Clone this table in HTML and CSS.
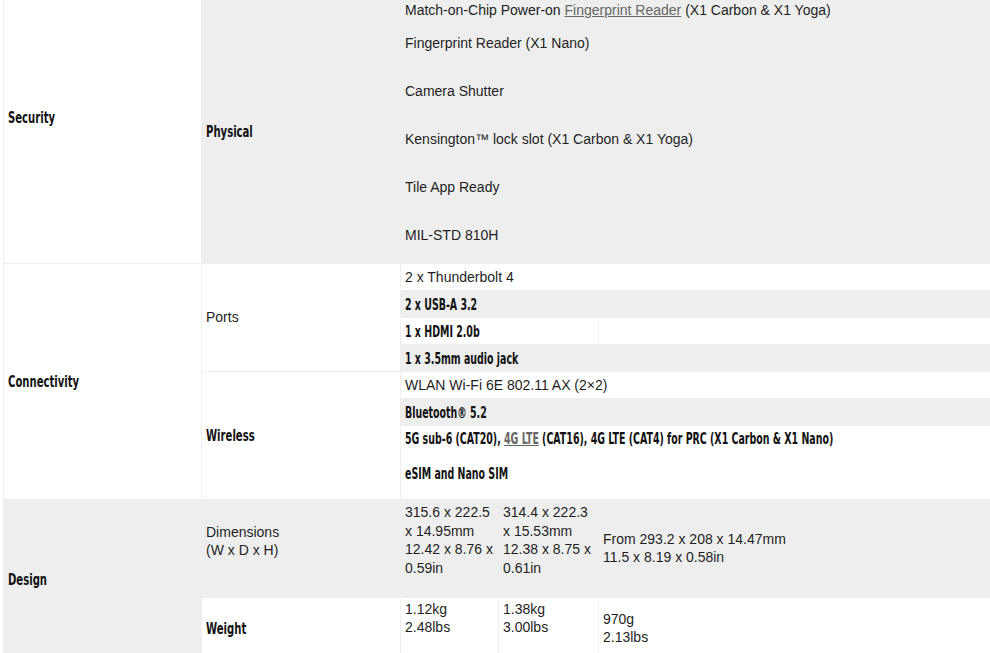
FILE: index.html
```html
<!DOCTYPE html>
<html lang="en">
<head>
  <meta charset="UTF-8" />
  <meta name="viewport" content="width=device-width, initial-scale=1.0"/>
  <title>ThinkPad X1 Specs</title>
  <link rel="stylesheet" href="styles.css">
</head>
<body>
  <div class="wrap">
    <table class="specs">
      <colgroup>
        <col class="col-cat">
        <col class="col-sub">
        <col class="col-a">
        <col class="col-b">
        <col class="col-c">
      </colgroup>

      <!-- Security -->
      <tr class="first">
        <td class="cat security"><span class="cond">Security</span></td>
        <td class="sub grey"><span class="cond big">Physical</span></td>
        <td colspan="3" class="grey list">
          <p>Match-on-Chip Power-on <a href="#">Fingerprint Reader</a> (X1 Carbon &amp; X1 Yoga)</p>
          <p class="near">Fingerprint Reader (X1 Nano)</p>
          <p>Camera Shutter</p>
          <p>Kensington™ lock slot (X1 Carbon &amp; X1 Yoga)</p>
          <p>Tile App Ready</p>
          <p>MIL-STD 810H</p>
        </td>
      </tr>

      <!-- Connectivity -->
      <tr>
        <td rowspan="7" class="cat"><span class="cond">Connectivity</span></td>
        <td rowspan="4" class="sub">Ports</td>
        <td colspan="3" class="line">2 x Thunderbolt 4</td>
      </tr>
      <tr>
        <td colspan="3" class="line grey"><span class="cond">2 x USB-A 3.2</span></td>
      </tr>
      <tr>
        <td colspan="2" class="line"><span class="cond">1 x HDMI 2.0b</span></td>
        <td class="line"></td>
      </tr>
      <tr>
        <td colspan="3" class="line grey"><span class="cond">1 x 3.5mm audio jack</span></td>
      </tr>
      <tr>
        <td rowspan="3" class="sub"><span class="cond big">Wireless</span></td>
        <td colspan="3" class="line">WLAN Wi-Fi 6E 802.11 AX (2×2)</td>
      </tr>
      <tr>
        <td colspan="3" class="line grey"><span class="cond">Bluetooth® 5.2</span></td>
      </tr>
      <tr>
        <td colspan="3" class="cellular">
          <p><span class="cond">5G sub-6 (CAT20), <a href="#">4G LTE</a> (CAT16), 4G LTE (CAT4) for PRC (X1 Carbon &amp; X1 Nano)</span></p>
          <p><span class="cond">eSIM and Nano SIM</span></p>
        </td>
      </tr>

      <!-- Design -->
      <tr>
        <td rowspan="2" class="cat grey"><span class="cond">Design</span></td>
        <td class="sub grey dims-label">Dimensions<br>(W x D x H)</td>
        <td class="grey top dims">315.6 x 222.5<br>x 14.95mm<br>12.42 x 8.76 x<br>0.59in</td>
        <td class="grey top dims">314.4 x 222.3<br>x 15.53mm<br>12.38 x 8.75 x<br>0.61in</td>
        <td class="grey">From 293.2 x 208 x 14.47mm<br>11.5 x 8.19 x 0.58in</td>
      </tr>
      <tr>
        <td class="sub"><span class="cond big">Weight</span></td>
        <td class="top weight">1.12kg<br>2.48lbs</td>
        <td class="top weight">1.38kg<br>3.00lbs</td>
        <td>970g<br>2.13lbs</td>
      </tr>
    </table>
  </div>
</body>
</html>
```

FILE: styles.css
```css
body {
  margin: 0;
  background: white;
  font-family: "Liberation Sans", Arial, sans-serif;
  font-size: 14px;
  color: #1e1e1e;
  overflow: hidden;
}
.wrap {
  padding-left: 3px;
}
.specs {
  width: 988px;
  table-layout: fixed;
  border-collapse: collapse;
}
.col-cat { width: 198px; }
.col-sub { width: 199px; }
.col-a { width: 98px; }
.col-b { width: 100px; }

.specs td {
  border: 1px solid #eee;
  padding: 0 4px;
  line-height: 18.67px;
  vertical-align: middle;
  white-space: nowrap;
}
.specs tr.first td {
  border-top: 0;
}
.specs p {
  margin: 0;
}
.specs a {
  color: #666;
}
.grey {
  background: #eee;
}
.top {
  vertical-align: top !important;
}

/* condensed bold labels */
.cond {
  display: inline-block;
  vertical-align: -1px;
  line-height: 16px;
  font-family: "DejaVu Sans Condensed", "DejaVu Sans", sans-serif;
  font-stretch: condensed;
  font-weight: bold;
  font-size: 15px;
  color: #111;
  transform: scaleX(0.7);
  transform-origin: 0 50%;
}
.cat .cond,
.cond.big {
  font-size: 16px;
}
.security {
  padding-bottom: 28px !important;
}

/* security list */
.list {
  vertical-align: top !important;
  padding: 1px 4px 19px !important;
}
.list p {
  line-height: 18px;
  margin-top: 30px;
}
.list p:first-child {
  margin-top: 0;
}
.list p.near {
  margin-top: 15px;
}

/* single line rows */
.line {
  line-height: 18px !important;
  padding: 4px 4px !important;
}
.cellular {
  vertical-align: top !important;
  padding: 3px 4px 17px !important;
}
.cellular p {
  line-height: 18px;
}
.cellular p + p {
  margin-top: 17px;
}

/* design */
.dims-label {
  padding-bottom: 14px !important;
}
.dims {
  padding: 3px 4px 19px !important;
}
.weight {
  padding: 2px 4px 22px !important;
}
```
